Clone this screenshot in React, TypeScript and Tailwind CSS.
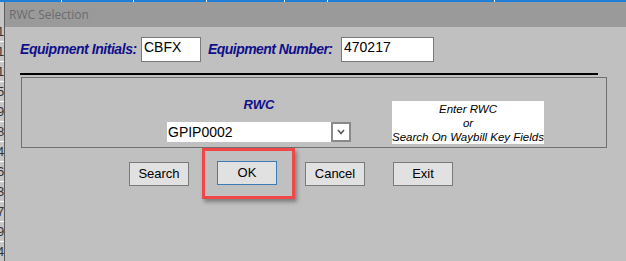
import React from "react";

const rowDigits = ["1", "1", "1", "5", "9", "8", "4", "6", "3", "7", "9", "4", "2"];
const ticks = [61, 133, 206, 284, 327, 494];

function DialogButton({ label, focused }: { label: string; focused?: boolean }) {
    return (
        <button
            className={
                "w-[60px] h-[24px] flex items-center justify-center text-[13px] text-black bg-[#e1e1e1] border " +
                (focused ? "border-[#3a7bb8]" : "border-[#7a7a7a]")
            }
        >
            {label}
        </button>
    );
}

export default function App() {
    return (
        <div
            className="relative w-[626px] h-[261px] overflow-hidden bg-[#c0c0c0] flex flex-col"
            style={{ fontFamily: '"Liberation Sans", Arial, sans-serif' }}
        >
            {/* spreadsheet header peeking out at the top */}
            <div className="relative h-[2px] bg-[#1e7fd8] shrink-0">
                {ticks.map((x) => (
                    <div key={x} className="absolute top-0 w-[1px] h-[2px] bg-white" style={{ left: x }} />
                ))}
            </div>

            <div className="flex flex-1 min-h-0">
                {/* row numbers of the sheet behind */}
                <div className="w-[4px] shrink-0 overflow-hidden bg-[#c6c6c6] flex flex-col pt-[20px]">
                    {rowDigits.map((d, i) => (
                        <div
                            key={i}
                            className="h-[20px] shrink-0 border-b border-white text-[13px] leading-[19px] text-[#333] -ml-[3px]"
                        >
                            {d}
                        </div>
                    ))}
                </div>

                {/* dialog */}
                <div className="flex-1 flex flex-col border-l border-[#5c5c5c]">
                    <div
                        className="h-[25px] shrink-0 bg-[#9a9a9a] flex items-center pl-[4px] text-[12px] text-[#6b6b6b]"
                        style={{ fontFamily: '"Open Sans", "Noto Sans", sans-serif' }}
                    >
                        RWC Selection
                    </div>

                    <div className="flex flex-col pl-[15px]">
                        {/* equipment fields */}
                        <div className="flex items-center mt-[9px] h-[26px]">
                            <span className="w-[116px] whitespace-nowrap text-[14px] font-bold italic text-[#10108a] tracking-[-0.45px]">
                                Equipment Initials:
                            </span>
                            <div className="ml-[5px] w-[60px] h-[25px] bg-white border border-[#7a7a7a] pl-[2px] pt-[1px] text-[14px] leading-[17px] text-black">
                                CBFX
                            </div>
                            <span className="ml-[7px] w-[124px] whitespace-nowrap text-[14px] font-bold italic text-[#10108a] tracking-[-0.55px]">
                                Equipment Number:
                            </span>
                            <div className="ml-[9px] w-[93px] h-[25px] bg-white border border-[#7a7a7a] pl-[2px] pt-[1px] text-[14px] leading-[17px] text-black">
                                470217
                            </div>
                        </div>

                        <div className="mt-[11px] w-[578px] h-[2px] bg-black" />

                        {/* RWC box */}
                        <div className="mt-[2px] ml-[1px] w-[586px] h-[71px] border border-[#707070] flex items-start">
                            <div className="ml-[145px] mt-[19px] flex flex-col items-center">
                                <span className="h-[16px] leading-[16px] text-[13px] font-bold italic text-[#10108a]">RWC</span>
                                <div className="mt-[9px] w-[184px] h-[20px] flex bg-white">
                                    <div className="flex-1 pl-[1px] text-[14px] leading-[20px] text-black">GPIP0002</div>
                                    <div className="w-[20px] h-[20px] border-2 border-[#8a8a8a] bg-white flex items-center justify-center">
                                        <svg width="8" height="6" viewBox="0 0 8 6">
                                            <path d="M1 1 L4 4.5 L7 1" fill="none" stroke="#555" strokeWidth="1.6" />
                                        </svg>
                                    </div>
                                </div>
                            </div>
                            <div className="ml-[41px] mt-[23px] w-[152px] h-[43px] bg-white flex flex-col items-center justify-center text-[11.5px] leading-[14px] italic text-black">
                                <span>Enter RWC</span>
                                <span>or</span>
                                <span>Search On Waybill Key Fields</span>
                            </div>
                        </div>

                        {/* buttons */}
                        <div className="flex items-start mt-[13px] ml-[109px]">
                            <div className="mt-[1px]">
                                <DialogButton label="Search" />
                            </div>
                            <div className="ml-[28px]">
                                <DialogButton label="OK" focused />
                            </div>
                            <div className="ml-[28px] mt-[1px]">
                                <DialogButton label="Cancel" />
                            </div>
                            <div className="ml-[28px] mt-[1px]">
                                <DialogButton label="Exit" />
                            </div>
                        </div>
                    </div>
                </div>
            </div>

            {/* red highlight annotation over the OK button */}
            <div className="absolute left-[202px] top-[148px] w-[93px] h-[51px] border-[3px] border-[#f04848] shadow-[2px_3px_4px_rgba(0,0,0,0.35)]" />
        </div>
    );
}
